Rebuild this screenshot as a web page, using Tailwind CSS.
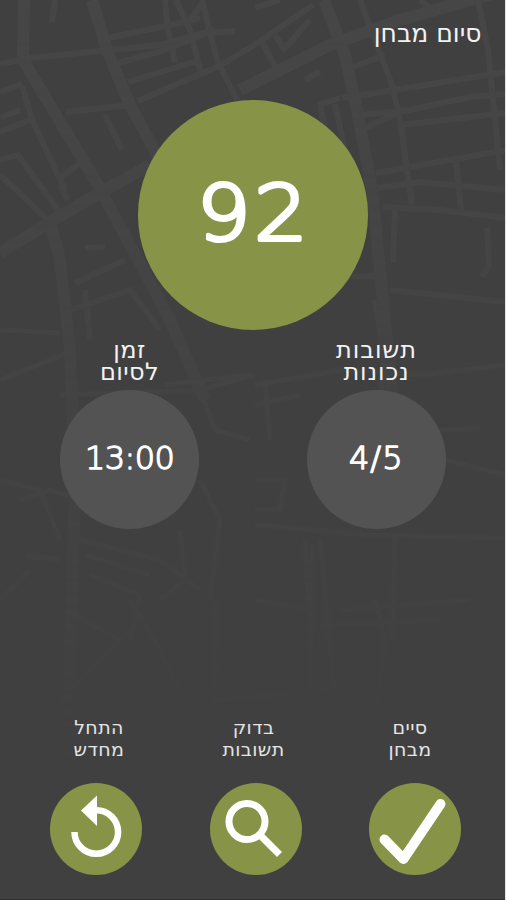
<!DOCTYPE html>
<html lang="he" dir="rtl">

<head>
    <meta charset="UTF-8">
    <meta name="viewport" content="width=device-width, initial-scale=1.0">
    <title>סיום מבחן</title>
    <script src="https://cdn.jsdelivr.net/npm/@tailwindcss/browser@4"></script>
</head>

<body class="h-[900px] overflow-hidden bg-[#e4e4e4] font-['DejaVu_Sans',sans-serif] text-[#f2f2f2]">
    <div class="relative isolate mr-[1.5px] flex h-[900px] flex-col overflow-hidden border-b border-[#3a2e36] bg-[#404040]">

        <!-- Street map -->
        <svg class="absolute left-0 top-0 -z-10 h-[900px] w-[506px]" viewBox="0 0 506 900" fill="none" stroke="#484848">
            <defs>
                <linearGradient id="fade" x1="0" y1="0" x2="0" y2="1">
                    <stop offset="0" stop-color="#fff" stop-opacity=".8" />
                    <stop offset=".35" stop-color="#fff" stop-opacity=".5" />
                    <stop offset=".6" stop-color="#fff" stop-opacity=".3" />
                    <stop offset=".9" stop-color="#fff" stop-opacity="0" />
                </linearGradient>
                <mask id="map-mask" maskUnits="userSpaceOnUse" x="0" y="0" width="506" height="900">
                    <rect width="506" height="900" fill="url(#fade)" stroke="none" />
                </mask>
            </defs>
            <g mask="url(#map-mask)">
                <g stroke-width="12">
                    <path d="M24 0L23 60L38 85L95 180L133 250L170 320L205 400" />
                    <path d="M92 0L107 50L130 105L160 160L190 220" />
                    <path d="M324 0L345 55L357 110L372 190L383 300L395 420" />
                    <path d="M0 253L50 222L105 190L150 165" />
                    <path d="M50 222L60 260L70 350L75 480L72 600L65 760" />
                    <path d="M240 90L330 45L400 20L506 -10" />
                </g>
                <g stroke-width="6">
                    <path d="M0 64L30 58L100 51L160 45L215 30" />
                    <path d="M108 38L170 25L200 18M118 63L165 50L207 33L235 31M128 82L200 60M138 101L217 67L253 46L313 5" />
                    <path d="M165 0L168 30L175 63M176 0L190 30L201 73M202 0L217 60L237 100M190 20L203 3" />
                    <path d="M66 112L130 105M105 115L122 150M22 85L32 120L65 190M0 132L35 118M0 92L22 84M0 118L20 110M0 160L18 155L58 210M0 175L50 222" />
                    <path d="M58 180L80 163M60 185L68 200M55 0L52 22M75 283L125 260M85 248L105 247M70 310L130 290L160 330M85 290L90 340" />
                    <path d="M262 42L276 68M275 35L284 49L310 20M305 80L320 72M350 68L385 55M360 0L375 40L392 85L400 120L412 205" />
                    <path d="M342 98L395 90L506 72M360 115L410 110L470 97L506 94M360 130L398 113M400 125L506 113M376 173L506 150M378 188L420 182L506 190M383 207L440 210L506 218" />
                    <path d="M478 0L488 50L500 170M487 228L489 265L482 277M456 160L461 210M395 210L393 262M340 98L318 105M320 106L330 150M335 104L345 150" />
                    <path d="M255 8L280 0M420 0L435 12M312 278L375 276M390 290L506 302M375 300L383 350L380 450" />
                </g>
                <g stroke-width="5">
                    <path d="M0 330L60 333M0 380L75 350M60 395L200 390L253 375M165 385L250 375M200 390L215 430L250 440M200 480L220 520L210 600" />
                    <path d="M255 385L340 370L420 375L506 365M265 380L270 440M255 405L300 395M440 430L480 428M445 460L506 475M255 480L285 480L280 510L255 510" />
                    <path d="M255 525L370 535L506 538M305 540L308 600M320 540L335 700M395 535L392 640M255 600L310 610M312 545L310 690" />
                    <path d="M0 480L40 490L60 540M20 500L50 490L80 500M80 540L160 560L200 590M85 555L150 575M90 575L140 595L130 640M25 555L60 560M0 600L30 570" />
                    <path d="M180 530L185 580L160 600M130 600L155 640L180 690M215 600L215 700L330 690M65 610L120 640L60 700M340 610L470 600M320 625L440 620M375 600L385 640L375 720" />
                </g>
            </g>
        </svg>

        <!-- Header -->
        <header class="h-[100px] shrink-0 pt-4 pr-[23px]">
            <h1 class="text-[25px] leading-9">סיום מבחן</h1>
        </header>

        <!-- Score -->
        <div class="mr-[136.5px] size-[230px] shrink-0 rounded-full bg-[#879447]">
            <svg class="size-[230px]" viewBox="0 0 230 230" direction="ltr">
                <text x="53.5" y="140.5" transform="scale(1.1 1)" class="font-['DejaVu_Sans'] text-[77px] font-extralight tracking-[3px]" fill="#fff" stroke="#fff" stroke-width="4" stroke-linejoin="round">92</text>
            </svg>
        </div>

        <!-- Stats -->
        <section class="flex shrink-0 justify-between pt-[9px] pr-[58.5px] pl-[60px] text-center">
            <div class="w-[139px]">
                <h2 class="h-[51px] text-[24px] leading-[22px] tracking-[0.9px]">תשובות<br>נכונות</h2>
                <div class="size-[139px] rounded-full bg-[#535353]">
                    <svg class="size-[139px]" viewBox="0 0 139 139" direction="ltr">
                        <text x="42" y="79" class="font-['DejaVu_Sans'] text-[32px] font-extralight tracking-[1px]" fill="#fff" stroke="#fff" stroke-width="1.4" stroke-linejoin="round">4/5</text>
                    </svg>
                </div>
            </div>
            <div class="w-[139px]">
                <h2 class="h-[51px] text-[24px] leading-[22px] tracking-[0.4px]">זמן<br>לסיום</h2>
                <div class="size-[139px] rounded-full bg-[#535353]">
                    <svg class="size-[139px]" viewBox="0 0 139 139" direction="ltr">
                        <text x="25" y="79" class="font-['DejaVu_Sans'] text-[32px] font-extralight tracking-[-0.6px]" fill="#fff" stroke="#fff" stroke-width="1.4" stroke-linejoin="round">13:00</text>
                    </svg>
                </div>
            </div>
        </section>

        <!-- Actions -->
        <nav class="mt-auto flex shrink-0 justify-between pr-[43.5px] pb-6 pl-[50px] text-center text-[19px] leading-[22px] tracking-[0.4px] text-[#e4e4e4]">
            <a href="#" class="w-[92px]">
                <span class="mr-[5px] ml-[-5px] block h-[67px]">סיים<br>מבחן</span>
                <svg class="size-[92px]" viewBox="0 0 92 92" fill="none">
                    <circle cx="46" cy="46" r="46" fill="#879447" />
                    <path d="M15.5 56.500L34.500 76L71.500 21" stroke="#fff" stroke-width="10" stroke-linecap="round" stroke-linejoin="round" />
                </svg>
            </a>
            <a href="#" class="w-[92px]">
                <span class="mr-[2px] ml-[-2px] block h-[67px]">בדוק<br>תשובות</span>
                <svg class="size-[92px]" viewBox="0 0 92 92" fill="none" stroke="#fff">
                    <circle cx="46" cy="46" r="46" fill="#879447" stroke="none" />
                    <circle cx="37" cy="38.500" r="18" stroke-width="7" />
                    <path d="M50 52L69.500 71.500" stroke-width="7" />
                </svg>
            </a>
            <a href="#" class="w-[92px]">
                <span class="mr-[-3px] ml-[3px] block h-[67px]">התחל<br>מחדש</span>
                <svg class="size-[92px]" viewBox="0 0 92 92" fill="none">
                    <circle cx="46" cy="46" r="46" fill="#879447" />
                    <path d="M24.500 49A21.800 21.800 0 1 0 46.300 27.200" stroke="#fff" stroke-width="6.500" />
                    <path d="M47 12.500V43L31 27.500Z" fill="#fff" />
                </svg>
            </a>
        </nav>
    </div>
</body>

</html>
